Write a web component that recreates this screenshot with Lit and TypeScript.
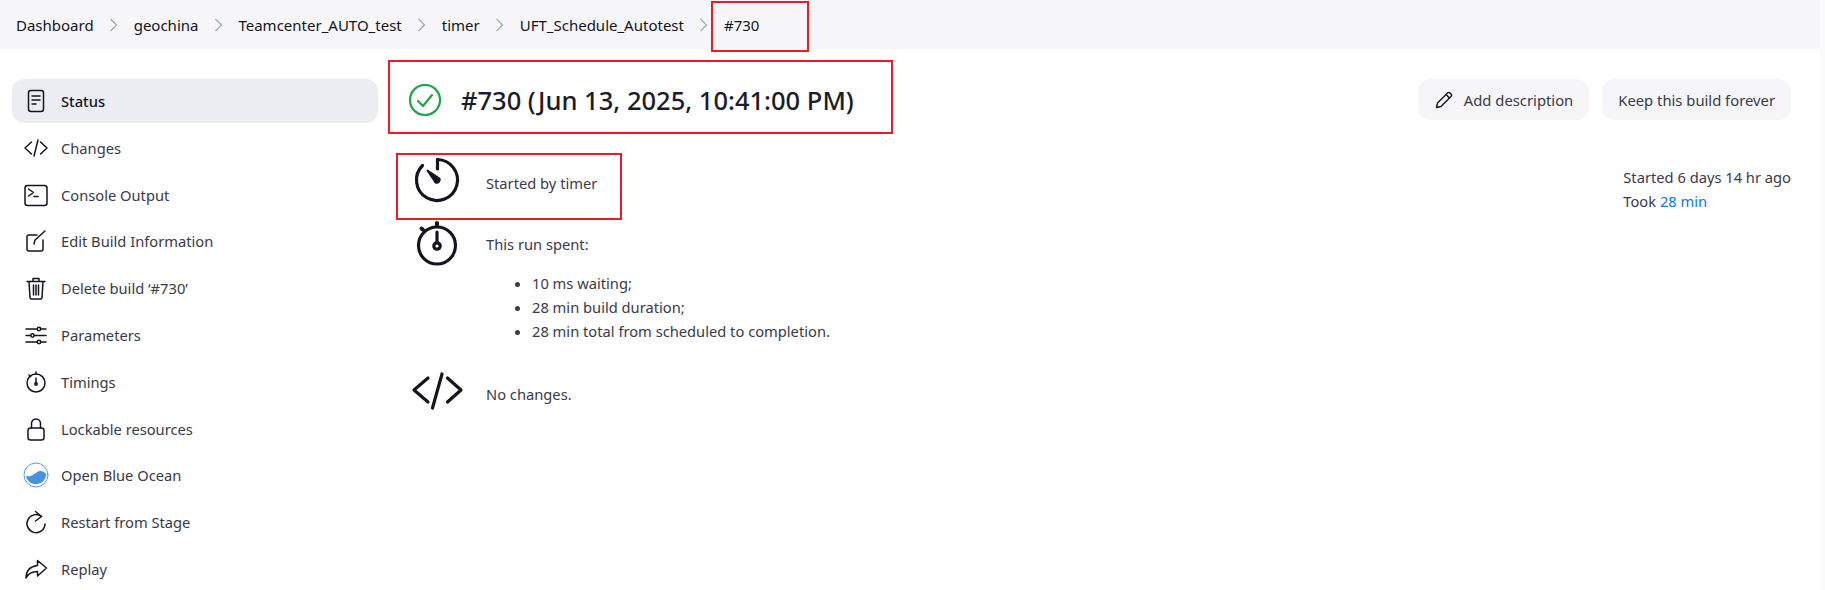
import { LitElement, html, css, svg } from "lit";
import { customElement } from "lit/decorators.js";

// sidebar icons, all drawn on a 24 box with a stroke
const icons: Record<string, unknown> = {
  status: svg`<rect x="4.5" y="1.5" width="15" height="21" rx="2.5"/><path d="M8 7h8M8 11h8M8 15h4"/>`,
  changes: svg`<path d="M7.5 6 1 12l6.500 6M16.500 6 23 12l-6.500 6M14 4l-4 16"/>`,
  console: svg`<rect x="1" y="2.500" width="22" height="20" rx="2.500"/><path d="M4.500 6l5 3.500-5 3.500M10 13.500h4"/>`,
  edit: svg`<path d="M13 6H5a2 2 0 0 0-2 2v12a2 2 0 0 0 2 2h12a2 2 0 0 0 2-2v-9"/><path d="M10 15l1-4L21 2"/>`,
  trash: svg`<path d="M3 5.500h18M9 5V2.500h6V5M5 5.500l1 16a1.500 1.500 0 0 0 1.500 1.500h9a1.500 1.500 0 0 0 1.500-1.500l1-16M9.500 9v10M12 9v10M14.500 9v10"/>`,
  params: svg`<path d="M2 6h11M17 6h5M2 12.500h4.500M10.500 12.500H22M2 19h11M17 19h5"/><circle cx="15" cy="6" r="1.700"/><circle cx="8.500" cy="12.500" r="1.700"/><circle cx="15" cy="19" r="1.700"/>`,
  timings: svg`<circle cx="12" cy="13" r="9"/><path d="M12 8v5M12 2v2M5 5l1.500 1.500"/><circle cx="12" cy="14" r="1.200"/>`,
  lock: svg`<rect x="4" y="11" width="16" height="12" rx="2.500"/><path d="M7.500 11V6.500a4.500 4.500 0 0 1 9 0V11"/>`,
  restart: svg`<path d="M17.500 6.500A9 9 0 1 0 21 14"/><path d="M11.500 1.500l6 5-6 4.500"/>`,
  replay: svg`<path d="M13.500 3.500 22.500 11l-9 8v-4.500C8 14.500 4.500 16 2 21c0-7 4-11.500 11.500-12.500z"/>`,
};

const side = [
  ["status", "Status"],
  ["changes", "Changes"],
  ["console", "Console Output"],
  ["edit", "Edit Build Information"],
  ["trash", "Delete build ‘#730’"],
  ["params", "Parameters"],
  ["timings", "Timings"],
  ["lock", "Lockable resources"],
  ["ocean", "Open Blue Ocean"],
  ["restart", "Restart from Stage"],
  ["replay", "Replay"],
];

const crumbs = ["Dashboard", "geochina", "Teamcenter_AUTO_test", "timer", "UFT_Schedule_Autotest", "#730"];

@customElement("app-root")
export class AppRoot extends LitElement {
  static styles = css`
    :host {
      display: flex;
      position: relative;
      width: 1825px;
      height: 590px;
      overflow: hidden;
      background: #fff;
      color: #14141f;
      font-family: "Noto Sans", "Open Sans", sans-serif;
      font-size: 14.700px;
    }
    .page {
      width: 1820px;
      flex: none;
    }
    .gutter {
      flex: 1;
      background: #fbfbfb;
    }
    .bar {
      display: flex;
      align-items: center;
      height: 49px;
      padding-left: 16px;
      background: #f6f6f9;
      font-size: 15px;
    }
    .crumb {
      white-space: nowrap;
    }
    .sep {
      width: 40px;
      display: flex;
      justify-content: center;
    }
    .sep svg {
      width: 9px;
      height: 14px;
      fill: none;
      stroke: #9fb0c8;
      stroke-width: 1.4;
    }
    .body {
      display: flex;
      padding: 30px 29px 0 12px;
    }
    .side {
      width: 366px;
      flex: none;
      margin-right: 10px;
    }
    .item {
      display: flex;
      align-items: center;
      gap: 13px;
      height: 44px;
      margin-bottom: 2.800px;
      padding-left: 12px;
      border-radius: 12px;
      color: #3a3a48;
    }
    .item.on {
      background: #ecedf3;
      color: #14141f;
      font-weight: 500;
    }
    .item svg {
      width: 24px;
      height: 24px;
      flex: none;
      fill: none;
      stroke: #14141f;
      stroke-width: 1.5;
      stroke-linecap: round;
      stroke-linejoin: round;
      overflow: visible;
    }
    .main {
      flex: 1;
      min-width: 0;
    }
    .head {
      display: flex;
      align-items: center;
      height: 41px;
    }
    .head h1 {
      display: flex;
      align-items: center;
      gap: 20px;
      margin: 0 0 0 21px;
      font-size: 25.500px;
      font-weight: 500;
      flex: 1;
      color: #1c1c28;
    }
    .head h1 svg {
      width: 32px;
      height: 32px;
      fill: none;
      stroke: #1ea64a;
      stroke-width: 2.200;
      stroke-linecap: round;
      stroke-linejoin: round;
    }
    .btn {
      display: flex;
      align-items: center;
      height: 41px;
      padding: 0 16px;
      margin-left: 13px;
      border-radius: 12px;
      background: #f6f6f9;
      color: #3a3a48;
      font-size: 14.800px;
    }
    .btn.add {
      gap: 11px;
      padding-left: 17px;
    }
    .btn svg {
      width: 18px;
      height: 18px;
      fill: none;
      stroke: #14141f;
      stroke-width: 1.4;
      stroke-linejoin: round;
    }
    .content {
      display: flex;
      justify-content: space-between;
      margin-top: 36px;
    }
    .rows {
      display: flex;
      flex-direction: column;
    }
    .row {
      display: flex;
      gap: 25px;
      padding-left: 25px;
      color: #3a3a48;
    }
    .row svg {
      width: 48px;
      height: 48px;
      flex: none;
      fill: none;
      stroke: #14141f;
      stroke-width: 3.200;
      stroke-linecap: round;
      stroke-linejoin: round;
      overflow: visible;
    }
    .row p {
      margin: 0;
      line-height: 24px;
    }
    .row ul {
      margin: 15px 0 0;
      padding-left: 46px;
      line-height: 24px;
    }
    .timer {
      height: 65px;
    }
    .timer p {
      padding-top: 15px;
    }
    .watch {
      height: 145px;
    }
    .watch p {
      padding-top: 11px;
    }
    .code p {
      padding-top: 16px;
    }
    .meta {
      line-height: 24px;
      color: #3a3a48;
      margin-top: 9px;
    }
    .meta a {
      color: #0b78f0;
      text-decoration: none;
    }
    .box {
      position: absolute;
      border: 2px solid #ed1c24;
      box-sizing: border-box;
    }
    .bb {
      left: 711px;
      top: 1px;
      width: 98px;
      height: 51px;
    }
    .bt {
      left: 388px;
      top: 60px;
      width: 505px;
      height: 74px;
    }
    .bs {
      left: 396px;
      top: 153px;
      width: 226px;
      height: 67px;
    }
  `;

  private sideIcon(name: string) {
    if (name === "ocean") {
      return html`<svg viewBox="0 0 24 24" style="stroke:none">
        <circle cx="12" cy="12" r="12" fill="#fff" stroke="#5b9bea" stroke-width="1"></circle>
        <path
          d="M1.800 13c3 .8 5 .3 7.900-1.500s4-3.500 6.500-3.500c2.500 0 4.800 1 6 3.500A10.300 10.300 0 0 1 1.800 13z"
          fill="#4a90e2"
          stroke="none"
        ></path>
      </svg>`;
    }
    return html`<svg viewBox="0 0 24 24">${icons[name]}</svg>`;
  }

  render() {
    return html`
      <div class="page">
        <div class="bar">
          ${crumbs.map(
            (c, i) => html`<span class="crumb">${c}</span>${i < crumbs.length - 1
                ? html`<span class="sep"><svg viewBox="0 0 9 14"><path d="M1.500 1l6 6-6 6"></path></svg></span>`
                : ""}`
          )}
        </div>
        <div class="body">
          <nav class="side">
            ${side.map(
              ([ic, label], i) => html`<div class="item ${i === 0 ? "on" : ""}">${this.sideIcon(ic)}<span>${label}</span></div>`
            )}
          </nav>
          <div class="main">
            <div class="head">
              <h1>
                <svg viewBox="0 0 32 32"><circle cx="16" cy="16" r="15"></circle><path d="M9 17l5 5 9-11"></path></svg>
                #730 (Jun 13, 2025, 10:41:00 PM)
              </h1>
              <div class="btn add">
                <svg viewBox="0 0 18 18"><path d="M1.500 16.500l1-4.500L12.500 2a1.800 1.800 0 0 1 2.500 0l1 1a1.800 1.800 0 0 1 0 2.500L6 15.500z"></path><path d="M11 3.500l3.500 3.500"></path></svg>
                Add description
              </div>
              <div class="btn">Keep this build forever</div>
            </div>
            <div class="content">
              <div class="rows">
                <div class="row timer">
                  <svg viewBox="0 0 48 48">
                    <path d="M24.500 3.500A20.500 20.500 0 1 1 9.500 9.500"></path>
                    <path d="M24.500 3.500V13"></path>
                    <path d="M14.500 14.500L26.500 22.500a3 3 0 0 1-4 4z" fill="#14141f" stroke-width="2"></path>
                  </svg>
                  <p>Started by timer</p>
                </div>
                <div class="row watch">
                  <svg viewBox="0 0 48 48">
                    <circle cx="24" cy="24.500" r="18.500"></circle>
                    <circle cx="24" cy="25" r="3.200"></circle>
                    <path d="M24 11v10.500"></path>
                    <path d="M24 2v2M8.500 7.500l1.500 1.200" stroke-width="4"></path>
                  </svg>
                  <div>
                    <p>This run spent:</p>
                    <ul>
                      <li>10 ms waiting;</li>
                      <li>28 min build duration;</li>
                      <li>28 min total from scheduled to completion.</li>
                    </ul>
                  </div>
                </div>
                <div class="row code">
                  <svg viewBox="0 0 48 48"><path d="M15 12L1 24l14 12M34.500 12 48 24 34.500 36M29 8l-9.500 34"></path></svg>
                  <p>No changes.</p>
                </div>
              </div>
              <div class="meta">
                <div>Started 6 days 14 hr ago</div>
                <div>Took <a href="#">28 min</a></div>
              </div>
            </div>
          </div>
        </div>
      </div>
      <div class="gutter"></div>
      <div class="box bb"></div>
      <div class="box bt"></div>
      <div class="box bs"></div>
    `;
  }
}
